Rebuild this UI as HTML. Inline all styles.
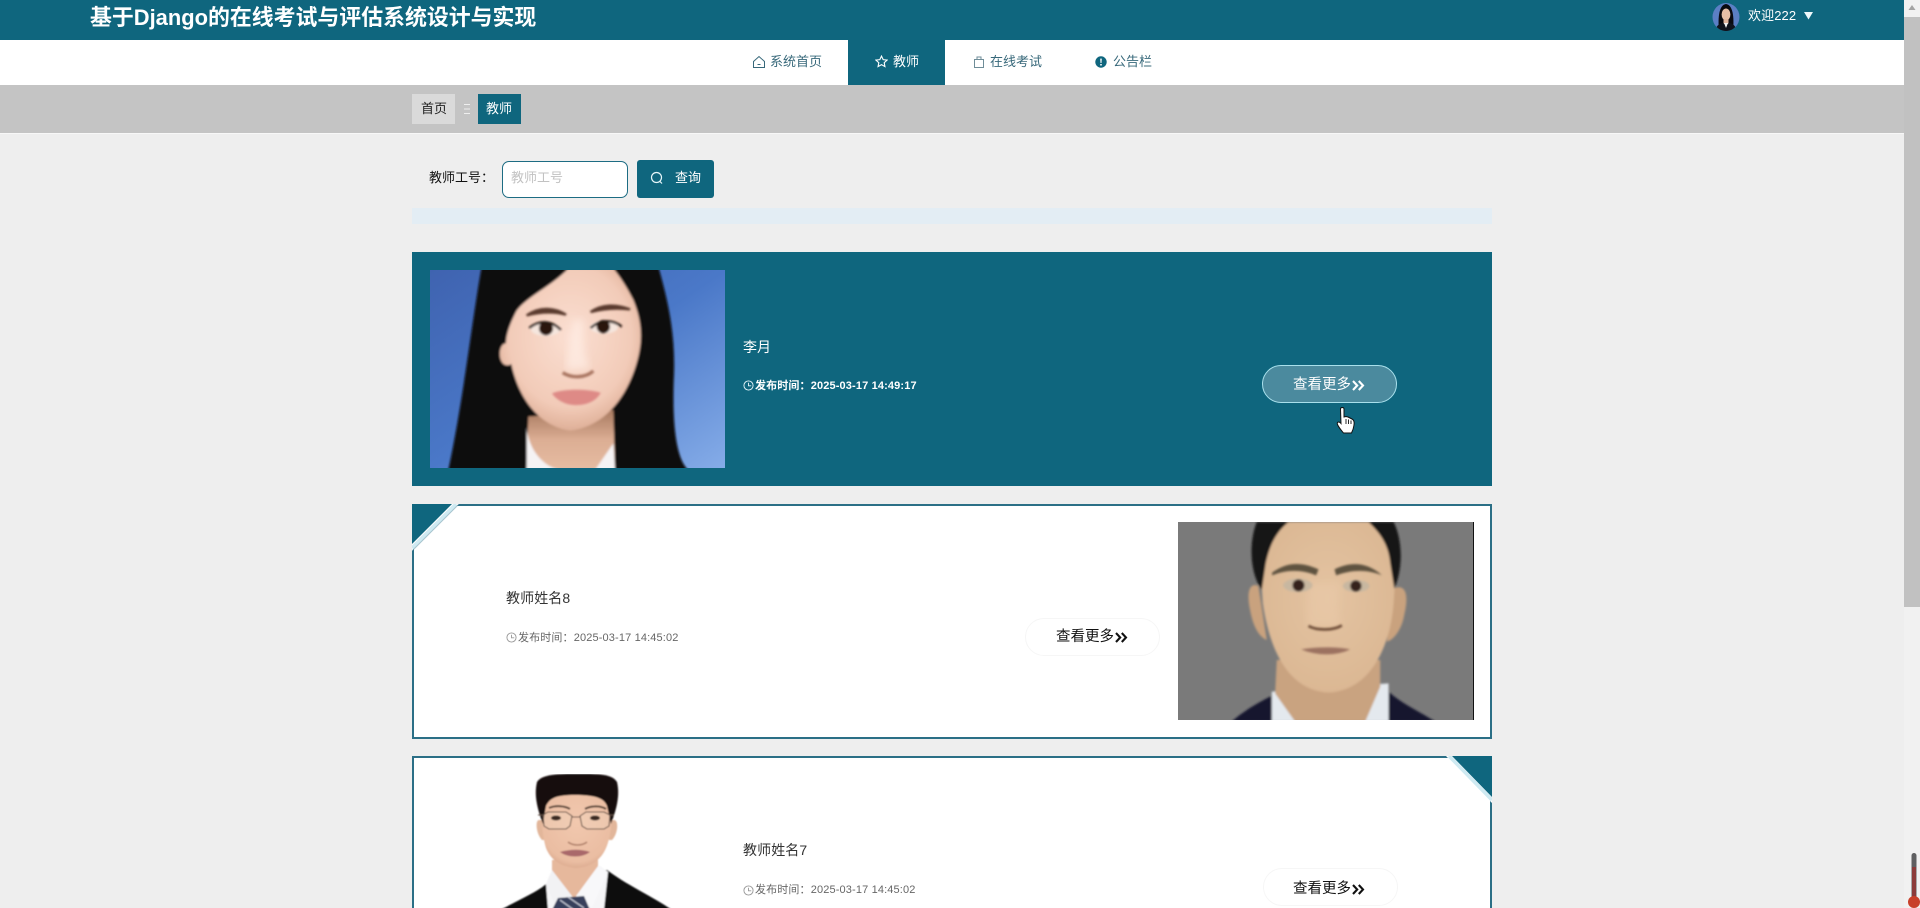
<!DOCTYPE html>
<html lang="zh">
<head>
<meta charset="utf-8">
<title>教师</title>
<style>
html,body{margin:0;padding:0;width:1920px;height:908px;overflow:hidden;background:#eeeeee}
body{position:relative;font-family:"Liberation Sans","Noto Sans CJK SC",sans-serif}
.a{position:absolute;display:block}
.t{position:absolute;white-space:nowrap;font-family:"Liberation Sans","Noto Sans CJK SC",sans-serif}
.btn{position:absolute;box-sizing:border-box;width:135px;height:38px;border-radius:19px;background:#fff;border:1px solid #f6f6f6}
.more{font-size:14.5px;line-height:20px;font-weight:400;color:#111}
.date{font-size:11px;line-height:16px;color:#666;letter-spacing:.14px}
.name{font-size:14px;line-height:20px;color:#333}
svg{overflow:hidden}
</style>
</head>
<body>
<!-- header -->
<div class="a" style="left:0;top:0;width:1920px;height:40px;background:#0f667e"></div>
<div class="t" style="left:90px;top:4px;font-size:21.9px;line-height:28px;font-weight:700;color:#fff">基于Django的在线考试与评估系统设计与实现</div>

<svg class="a" style="left:1712px;top:3px" width="28" height="28" viewBox="0 0 28 28">
<defs><clipPath id="av"><ellipse cx="14" cy="14" rx="13.5" ry="14"/></clipPath></defs>
<g clip-path="url(#av)">
<rect width="28" height="28" fill="#5b7fc4"/>
<path d="M7 28C6 18 6 2 14 1C22 2 22 18 21 28Z" fill="#0a0a10"/>
<ellipse cx="14" cy="11.5" rx="4.4" ry="6" fill="#e6bea6"/>
<path d="M11.5 16h5v5h-5z" fill="#e0b49c"/>
<path d="M3 28C5 21 9 20 11.5 20L14 24L16.5 20C19 20 23 21 25 28Z" fill="#10131c"/>
<path d="M12 20L14 25L16 20Z" fill="#f2f2f2"/>
</g>
</svg>
<div class="t" style="left:1748px;top:6px;font-size:13px;line-height:20px;color:#fff;letter-spacing:.1px">欢迎222</div>
<svg class="a" style="left:1804px;top:11px" width="9" height="9" viewBox="0 0 9 9"><path d="M0 1H9L4.5 8.5Z" fill="#eef8fb"/></svg>

<!-- nav -->
<div class="a" style="left:0;top:40px;width:1904px;height:45px;background:#fff"></div>
<div class="a" style="left:848px;top:40px;width:97px;height:45px;background:#0f667e"></div>

<svg class="a" style="left:752px;top:55px" width="14" height="14" viewBox="0 0 14 14" fill="none" stroke="#37687a" stroke-width="1"><path d="M1.5 6.5L7 1.5L12.5 6.5V12.5H1.5Z"/><path d="M5.5 9.5H8.5"/></svg>
<div class="t" style="left:770px;top:52px;font-size:13px;line-height:20px;color:#37687a">系统首页</div>

<svg class="a" style="left:875px;top:55px" width="13" height="13" viewBox="0 0 14 14" fill="none" stroke="#fff" stroke-width="1.2"><path d="M7 1.2L8.8 5L13 5.5L9.9 8.3L10.7 12.5L7 10.4L3.3 12.5L4.1 8.3L1 5.5L5.2 5Z"/></svg>
<div class="t" style="left:893px;top:52px;font-size:13px;line-height:20px;color:#fff">教师</div>

<svg class="a" style="left:973px;top:55px" width="12" height="14" viewBox="0 0 12 14" fill="none" stroke="#6f8d98" stroke-width="1"><path d="M1.5 4.5H10.5V12.5H1.5Z"/><path d="M4 4.5V2H8V4.5"/></svg>
<div class="t" style="left:990px;top:52px;font-size:13px;line-height:20px;color:#37687a">在线考试</div>

<svg class="a" style="left:1095px;top:56px" width="12" height="12" viewBox="0 0 12 12"><circle cx="6" cy="6" r="5.7" fill="#0f667e"/><path d="M5.2 2.6H6.8L6.5 7H5.5Z" fill="#fff"/><rect x="5.2" y="8" width="1.6" height="1.5" fill="#fff"/></svg>
<div class="t" style="left:1113px;top:52px;font-size:13px;line-height:20px;color:#37687a">公告栏</div>

<!-- breadcrumb -->
<div class="a" style="left:0;top:85px;width:1904px;height:48px;background:#c4c4c4"></div>
<div class="a" style="left:0;top:133px;width:1904px;height:1px;background:#f7f7f7"></div>
<div class="a" style="left:412px;top:94px;width:43px;height:30px;background:#dadada"></div>
<div class="t" style="left:421px;top:99px;font-size:13px;line-height:20px;color:#222">首页</div>
<svg class="a" style="left:463px;top:103px" width="8" height="12" viewBox="0 0 8 12"><path d="M1 1.5H7M1 6H7M1 10.5H7" stroke="#eeeeee" stroke-width="1"/></svg>
<div class="a" style="left:478px;top:94px;width:43px;height:30px;background:#0f667e"></div>
<div class="t" style="left:486px;top:99px;font-size:13px;line-height:20px;color:#fff">教师</div>

<!-- search -->
<div class="t" style="left:429px;top:168px;font-size:13px;line-height:20px;color:#111">教师工号：</div>
<div class="a" style="left:502px;top:161px;width:126px;height:37px;box-sizing:border-box;background:#fff;border:1px solid #1d6c83;border-radius:7px"></div>
<div class="t" style="left:511px;top:168px;font-size:13px;line-height:20px;color:#c2c2c2">教师工号</div>
<div class="a" style="left:637px;top:160px;width:77px;height:38px;background:#0f667e;border-radius:3px"></div>
<svg class="a" style="left:650px;top:171px" width="14" height="14" viewBox="0 0 14 14" fill="none" stroke="#e6f6fa" stroke-width="1.2"><circle cx="6.5" cy="6.5" r="5"/><path d="M10 10.5L12 12.5"/></svg>
<div class="t" style="left:675px;top:168px;font-size:13px;line-height:20px;color:#fff">查询</div>

<div class="a" style="left:412px;top:208px;width:1080px;height:16px;background:#e3edf4"></div>

<!-- card 1 -->
<div class="a" style="left:412px;top:252px;width:1080px;height:234px;background:#0f667e"></div>
<svg class="a" style="left:430px;top:270px" width="295" height="198" viewBox="90 90 885 594" preserveAspectRatio="none">
<defs>
<linearGradient id="wb" x1="0" y1="0" x2="1" y2="1"><stop offset="0" stop-color="#3f63b0"/><stop offset=".5" stop-color="#4a78c8"/><stop offset="1" stop-color="#85ace8"/></linearGradient>
<radialGradient id="wf" cx=".5" cy=".42" r=".62"><stop offset="0" stop-color="#fbdfd2"/><stop offset=".7" stop-color="#f2cbb8"/><stop offset="1" stop-color="#d9a88f"/></radialGradient>
<linearGradient id="wn" x1="0" y1="0" x2="0" y2="1"><stop offset="0" stop-color="#a87a60"/><stop offset=".5" stop-color="#dcae94"/><stop offset="1" stop-color="#e6bca2"/></linearGradient>
<filter id="b2"><feGaussianBlur stdDeviation="3"/></filter>
<filter id="b5"><feGaussianBlur stdDeviation="12"/></filter>
</defs>
<rect x="90" y="90" width="885" height="594" fill="url(#wb)"/>
<g filter="url(#b2)">
<path d="M245 80C215 250 190 480 145 690H865C830 660 815 560 822 400C826 270 800 170 775 80Z" fill="#070709"/>
<path d="M385 530L640 510L645 690H380Z" fill="url(#wn)"/>
<path d="M380 560C385 630 430 680 480 690H380Z" fill="#f5f3f4"/>
<path d="M640 610L585 690H645Z" fill="#f5f3f4"/>
<path d="M505 85C460 135 380 170 350 212C325 260 318 290 318 310C298 310 295 350 305 365C312 378 325 378 334 372C350 450 400 555 510 572C620 560 690 460 716 345C730 280 720 230 700 180C680 140 660 110 640 85Z" fill="url(#wf)"/>
</g>
<g filter="url(#b5)"><path d="M520 240C510 310 495 360 500 390L570 385C550 340 545 290 550 240Z" fill="#ffeee6" opacity=".7"/></g>
<g filter="url(#b2)">
<path d="M380 226C420 198 465 203 498 224C460 214 420 216 380 226Z" fill="#5a3a2e" stroke="#5a3a2e" stroke-width="7"/>
<path d="M572 216C605 192 650 192 690 208C650 203 610 206 572 216Z" fill="#5a3a2e" stroke="#5a3a2e" stroke-width="7"/>
<ellipse cx="437" cy="268" rx="44" ry="20" fill="#f5e6de"/>
<ellipse cx="612" cy="262" rx="42" ry="19" fill="#f5e6de"/>
<circle cx="438" cy="265" r="21" fill="#2a1610"/>
<circle cx="610" cy="260" r="20" fill="#2a1610"/>
<path d="M388 264C420 238 458 243 482 270" fill="none" stroke="#201310" stroke-width="7"/>
<path d="M572 264C600 238 638 238 665 260" fill="none" stroke="#201310" stroke-width="7"/>
<path d="M488 398C515 415 555 415 580 393" fill="none" stroke="#a87460" stroke-width="10"/>
<path d="M456 460C490 446 560 446 602 458C580 505 490 510 456 460Z" fill="#de8a86"/>
</g>
</svg>
<div class="t" style="left:743px;top:337px;font-size:14px;line-height:20px;color:#fff">李月</div>
<svg class="a" style="left:743px;top:380px" width="11" height="11" viewBox="0 0 12 12" fill="none" stroke="#e8f7fb" stroke-width="1"><circle cx="6" cy="6" r="5"/><path d="M6 3V6.3H9"/></svg>
<div class="t date" style="left:755px;top:378px;color:#fff;font-weight:600">发布时间：2025-03-17 14:49:17</div>
<div class="a" style="left:1262px;top:365px;width:135px;height:38px;box-sizing:border-box;border-radius:19px;background:#4b8a9e;border:1px solid #a9e0ec"></div>
<div class="t more" style="left:1293px;top:375px;color:#fff">查看更多</div>
<svg class="a" style="left:1352px;top:380px" width="13" height="11" viewBox="0 0 13 11" fill="none" stroke="#fff" stroke-width="2.1"><path d="M1 1L5.2 5.5L1 10M6.8 1L11 5.5L6.8 10"/></svg>
<svg class="a" style="left:1336px;top:407px" width="20" height="27" viewBox="0 0 20 27"><path d="M4.5 2C4.5 0 8 0 8 2V10L10 9.5 12 10 14 11 16 12C18 13 18.5 15 18 18C17.5 22 16.5 24 15.5 26H7.5C6 24 3 21 1.5 17.5C.5 15 3 14 5 16.5Z" fill="#fff" stroke="#111" stroke-width="1"/><path d="M10 12V17M12.5 12.5V17M15 13.5V17" stroke="#111" stroke-width=".9"/></svg>

<!-- card 2 -->
<div class="a" style="left:412px;top:504px;width:1080px;height:235px;box-sizing:border-box;background:#fff;border:2px solid #2b6f86"></div>
<svg class="a" style="left:412px;top:504px" width="50" height="50" viewBox="0 0 50 50">
<path d="M0 0H47L0 47Z" fill="#fff"/>
<path d="M0 0H40L0 40Z" fill="#0f667e"/>
<path d="M44 0L0 44" stroke="#cfeaf2" stroke-width="3.5"/>
<path d="M47 0L0 47" stroke="#2b6f86" stroke-width="1" opacity=".4"/>
</svg>
<div class="t name" style="left:506px;top:588px;letter-spacing:.1px">教师姓名8</div>
<svg class="a" style="left:506px;top:632px" width="11" height="11" viewBox="0 0 12 12" fill="none" stroke="#999" stroke-width="1"><circle cx="6" cy="6" r="5"/><path d="M6 3V6.3H9"/></svg>
<div class="t date" style="left:518px;top:630px">发布时间：2025-03-17 14:45:02</div>
<div class="btn" style="left:1025px;top:618px"></div>
<div class="t more" style="left:1056px;top:627px">查看更多</div>
<svg class="a" style="left:1115px;top:632px" width="13" height="11" viewBox="0 0 13 11" fill="none" stroke="#111" stroke-width="2.1"><path d="M1 1L5.2 5.5L1 10M6.8 1L11 5.5L6.8 10"/></svg>
<svg class="a" style="left:1178px;top:522px" width="296" height="198" viewBox="534 66 887 594" preserveAspectRatio="none">
<defs>
<radialGradient id="mf" cx=".5" cy=".45" r=".66"><stop offset="0" stop-color="#e4c4a2"/><stop offset=".8" stop-color="#dcb894"/><stop offset="1" stop-color="#c9a27e"/></radialGradient>
</defs>
<rect x="534" y="66" width="887" height="594" fill="#7a7a7a"/>
<rect x="1418" y="66" width="3" height="594" fill="#111"/>
<g filter="url(#b2)">
<path d="M695 665C740 625 790 600 820 585L1160 570C1200 610 1260 635 1305 665Z" fill="#15182e"/>
<path d="M815 575L1165 550V665H815Z" fill="#e4e9ee"/>
<path d="M830 480H1140L1140 560L1095 665H885L825 580Z" fill="#c9a380"/>
<path d="M775 258C745 245 740 285 750 330C758 375 775 410 800 420Z" fill="#c9a27e"/>
<path d="M1180 265C1220 250 1225 290 1212 345C1204 390 1180 420 1160 425Z" fill="#c9a27e"/>
<path d="M785 66H1180C1190 150 1185 240 1180 310C1170 440 1110 572 985 578C870 572 810 460 788 310C782 230 780 150 785 66Z" fill="url(#mf)"/>
<path d="M770 66C745 130 750 220 785 270L797 190C810 130 830 95 865 66Z" fill="#141414"/>
<path d="M1105 66C1135 95 1165 130 1170 190L1182 265C1208 210 1208 120 1180 66Z" fill="#141414"/>
</g>
<g filter="url(#b5)"><path d="M925 250C920 310 925 350 920 380H1025C1010 340 1010 300 1020 250Z" fill="#e8c8a6" opacity=".7"/></g>
<g filter="url(#b2)">
<path d="M816 218C860 185 905 185 955 208L948 226C905 208 860 208 816 226Z" fill="#5f5340"/>
<path d="M1003 208C1050 185 1100 185 1145 226C1100 206 1050 210 1008 226Z" fill="#5f5340"/>
<ellipse cx="893" cy="256" rx="44" ry="20" fill="#c8b7a0"/>
<ellipse cx="1068" cy="258" rx="40" ry="18" fill="#c8b7a0"/>
<circle cx="895" cy="256" r="18" fill="#34231a"/>
<circle cx="1067" cy="258" r="17" fill="#34231a"/>
<path d="M925 378C950 392 1000 392 1025 376" fill="none" stroke="#6a4a36" stroke-width="8"/>
<path d="M903 448C950 440 1010 440 1050 448C1010 468 950 468 903 448Z" fill="#9c7260"/>
</g>
</svg>

<!-- card 3 -->
<div class="a" style="left:412px;top:756px;width:1080px;height:170px;box-sizing:border-box;background:#fff;border:2px solid #2b6f86"></div>
<svg class="a" style="left:1442px;top:756px" width="50" height="50" viewBox="0 0 50 50">
<path d="M50 0H4L50 47Z" fill="#fff"/>
<path d="M50 0H10L50 41Z" fill="#0f667e"/>
<path d="M7 0L50 44" stroke="#cfeaf2" stroke-width="3.5"/>
</svg>
<svg class="a" style="left:430px;top:774px" width="295" height="134" viewBox="430 774 295 134">
<defs><radialGradient id="gf" cx=".5" cy=".4" r=".65"><stop offset="0" stop-color="#f2c8ae"/><stop offset=".8" stop-color="#eabda2"/><stop offset="1" stop-color="#d6a488"/></radialGradient>
<filter id="b1"><feGaussianBlur stdDeviation=".7"/></filter></defs>
<g filter="url(#b1)">
<path d="M500 910C525 897 540 890 546 884L607 870C625 884 655 898 672 910Z" fill="#0b0b0d"/>
<path d="M546 884L552 870L600 866L608 872L604 910H548Z" fill="#f5f5f7"/>
<path d="M552 860H598L598 878L574 898L552 880Z" fill="#e6b89c"/>
<path d="M598 866L608 872L592 908L576 896Z" fill="#f8f8fa"/>
<path d="M552 870L546 884L556 908L572 896Z" fill="#f2f2f4"/>
<path d="M558 898L584 896L590 910H552Z" fill="#39405c"/>
<path d="M560 900L574 910M568 897L584 908" stroke="#c8cbd8" stroke-width="1.2"/>
<path d="M539 820C535 820 536 834 542 840L545 840V820Z" fill="#e2b69a"/>
<path d="M614 820C619 820 618 834 612 840L609 840V820Z" fill="#e2b69a"/>
<path d="M543 790H611C613 815 612 838 604 852C597 864 585 868 575 868C558 866 550 858 546 848C541 832 541 810 543 790Z" fill="url(#gf)"/>
<path d="M537 782C534 795 537 808 543 824L546 806C550 798 556 795 575 795C595 795 604 798 607 806L611 824C617 808 620 795 617 782C612 774 600 774 578 774C558 774 542 774 537 782Z" fill="#17100f"/>
<path d="M549 808C556 805 565 806 570 809M585 809C590 806 600 805 606 809" stroke="#5a4438" stroke-width="2" fill="none"/>
<path d="M543 815L548 812H566L572 816L570 826L566 829H549L544 826Z" fill="#f0d4bf" fill-opacity=".4" stroke="#5c4a40" stroke-width="1"/>
<path d="M580 816L586 812H604L610 815L609 826L604 829H587L582 826Z" fill="#f0d4bf" fill-opacity=".4" stroke="#5c4a40" stroke-width="1"/>
<path d="M572 817H580M538 815H543M610 815H614" stroke="#5c4a40" stroke-width="1"/>
<ellipse cx="556" cy="818" rx="5" ry="2.5" fill="#3a2a20"/>
<ellipse cx="595" cy="818" rx="5" ry="2.5" fill="#3a2a20"/>
<path d="M568 842C573 846 582 846 587 842" stroke="#b0806a" stroke-width="1.5" fill="none"/>
<path d="M560 852C570 849 582 849 590 852C582 858 568 858 560 852Z" fill="#a9686a"/>
</g>
</svg>
<div class="t name" style="left:743px;top:840px;letter-spacing:.1px">教师姓名7</div>
<svg class="a" style="left:743px;top:885px" width="11" height="11" viewBox="0 0 12 12" fill="none" stroke="#999" stroke-width="1"><circle cx="6" cy="6" r="5"/><path d="M6 3V6.3H9"/></svg>
<div class="t date" style="left:755px;top:882px">发布时间：2025-03-17 14:45:02</div>
<div class="btn" style="left:1263px;top:868px"></div>
<div class="t more" style="left:1293px;top:879px">查看更多</div>
<svg class="a" style="left:1352px;top:884px" width="13" height="11" viewBox="0 0 13 11" fill="none" stroke="#111" stroke-width="2.1"><path d="M1 1L5.2 5.5L1 10M6.8 1L11 5.5L6.8 10"/></svg>

<!-- scrollbar -->
<div class="a" style="left:1904px;top:0;width:16px;height:908px;background:#f1f1f1"></div>
<div class="a" style="left:1904px;top:17px;width:16px;height:590px;background:#c1c1c1"></div>
<svg class="a" style="left:1904px;top:0" width="16" height="16" viewBox="0 0 16 16"><path d="M4.5 10L8 5L11.5 10Z" fill="#a3a3a3"/></svg>
<svg class="a" style="left:1904px;top:850px" width="16" height="58" viewBox="0 0 16 58">
<rect x="7.5" y="3" width="5" height="50" rx="2.5" fill="#5f5f61"/>
<rect x="8" y="17" width="4" height="36" fill="#8b3b3a"/>
<circle cx="10" cy="52" r="6" fill="#c8402a"/>
</svg>
</body>
</html>
